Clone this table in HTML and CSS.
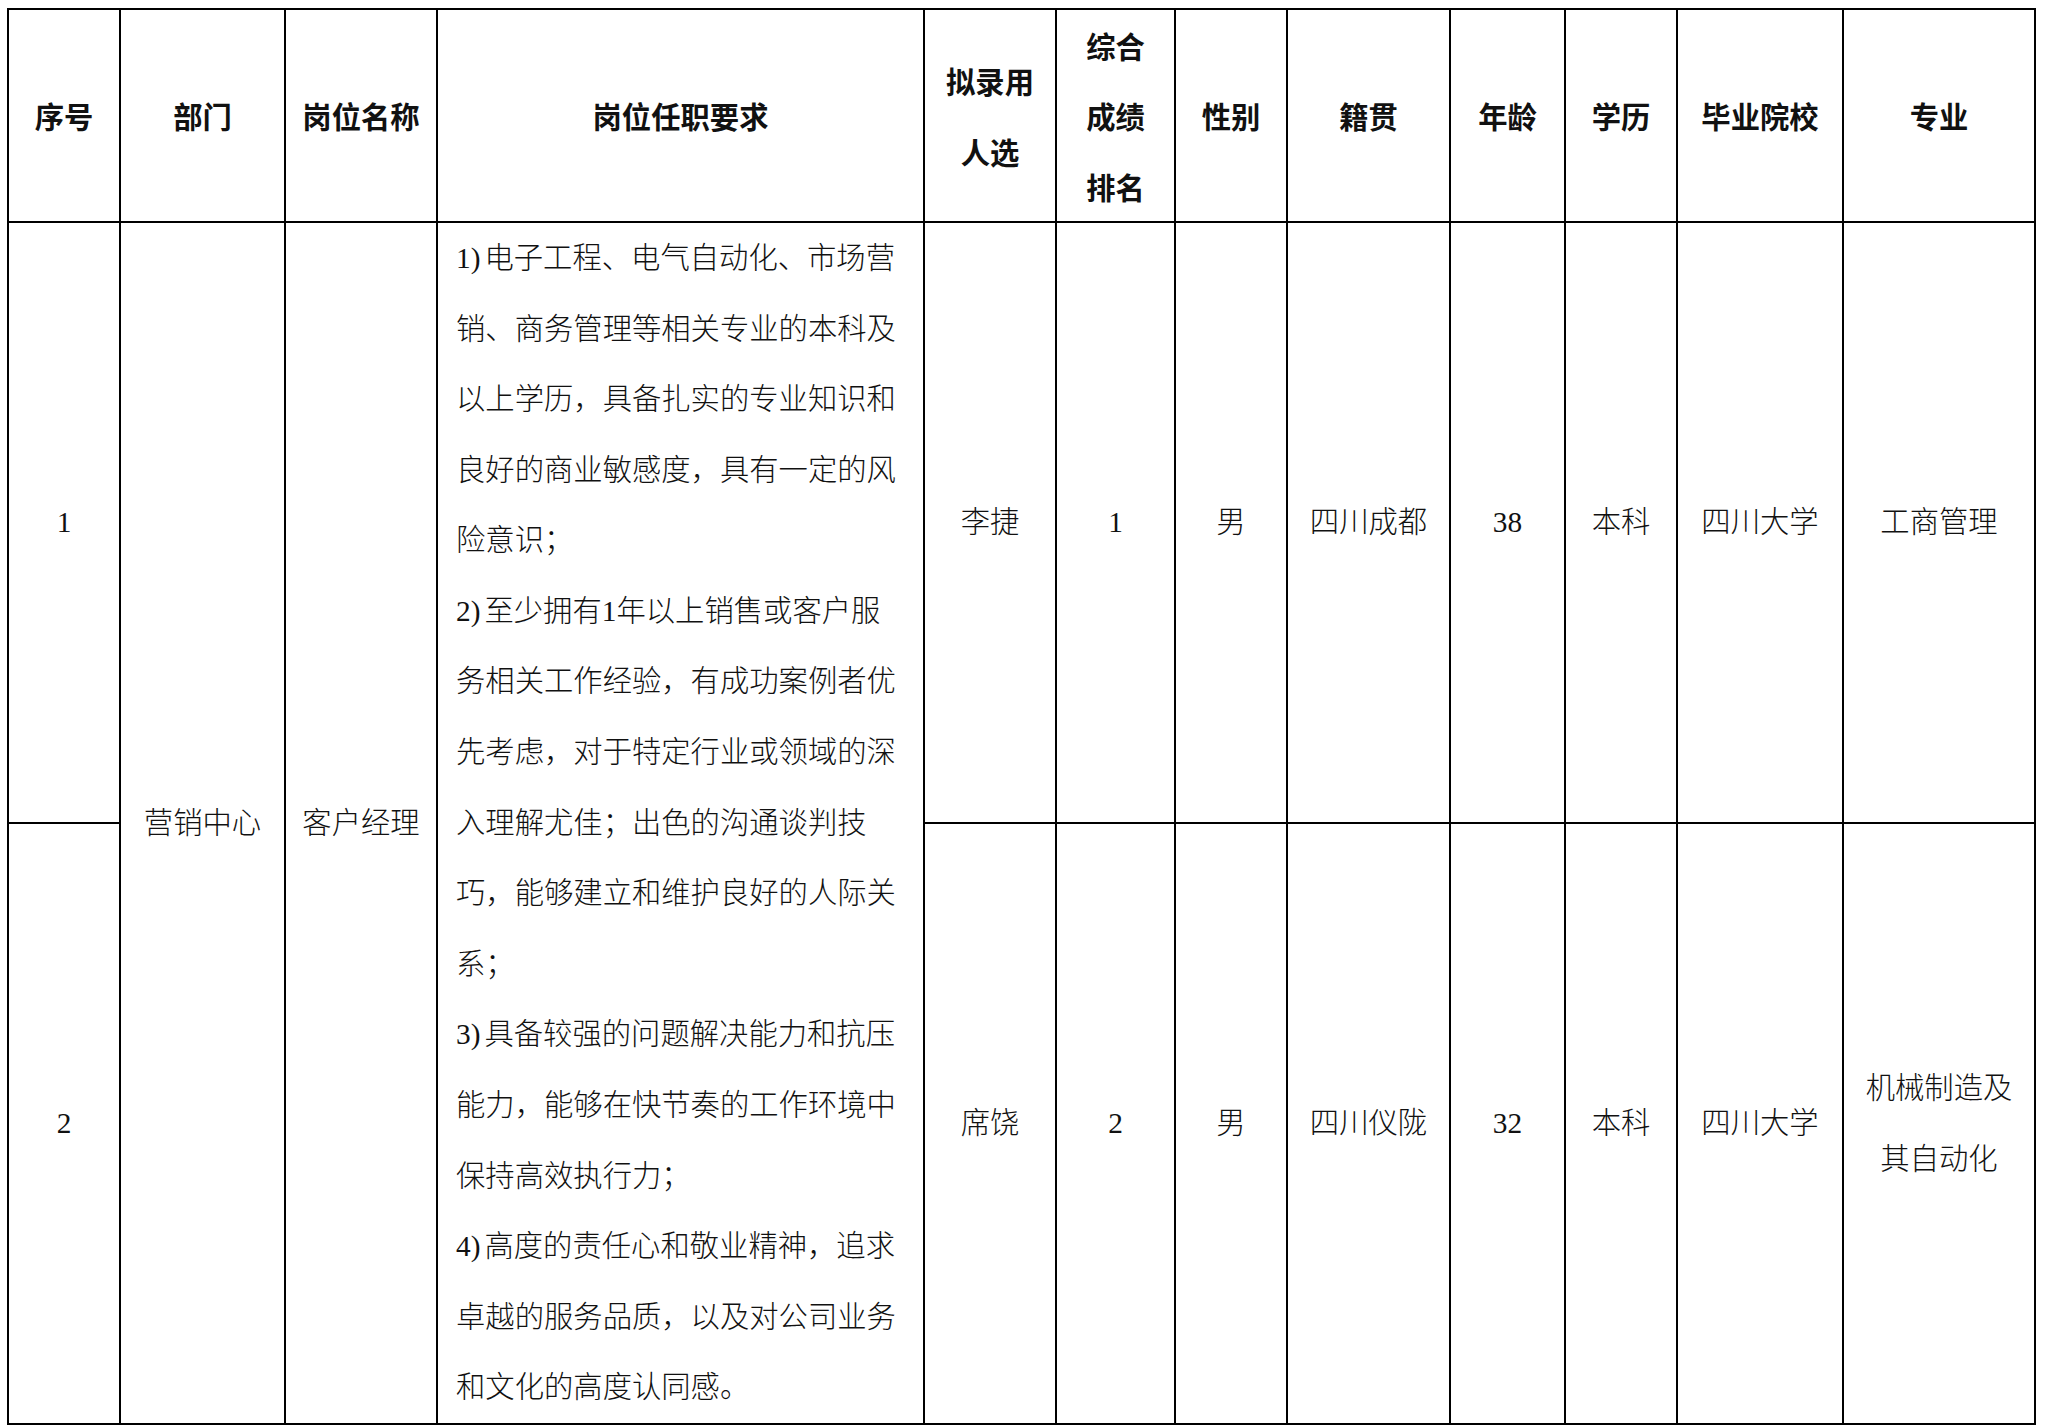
FILE: index.html
```html
<!DOCTYPE html>
<html lang="zh-CN">
<head>
<meta charset="utf-8">
<title>拟录用人员名单</title>
<link rel="stylesheet" href="styles.css">
</head>
<body>
<div class="page">
<table class="roster">
  <colgroup>
    <col class="c1"><col class="c2"><col class="c3"><col class="c4"><col class="c5"><col class="c6">
    <col class="c7"><col class="c8"><col class="c9"><col class="c10"><col class="c11"><col class="c12">
  </colgroup>
  <thead>
    <tr class="head-row">
      <th>序号</th>
      <th>部门</th>
      <th>岗位名称</th>
      <th>岗位任职要求</th>
      <th class="multi">拟录用<br>人选</th>
      <th class="multi">综合<br>成绩<br>排名</th>
      <th>性别</th>
      <th>籍贯</th>
      <th>年龄</th>
      <th>学历</th>
      <th>毕业院校</th>
      <th>专业</th>
    </tr>
  </thead>
  <tbody>
    <tr class="body-row">
      <td class="num">1</td>
      <td rowspan="2">营销中心</td>
      <td rowspan="2">客户经理</td>
      <td rowspan="2" class="req"><span class="num item">1)</span>电子工程、电气自动化、市场营<br>销、商务管理等相关专业的本科及<br>以上学历，具备扎实的专业知识和<br>良好的商业敏感度，具有一定的风<br>险意识；<br><span class="num item">2)</span>至少拥有<span class="num">1</span>年以上销售或客户服<br>务相关工作经验，有成功案例者优<br>先考虑，对于特定行业或领域的深<br>入理解尤佳；出色的沟通谈判技<br>巧，能够建立和维护良好的人际关<br>系；<br><span class="num item">3)</span>具备较强的问题解决能力和抗压<br>能力，能够在快节奏的工作环境中<br>保持高效执行力；<br><span class="num item">4)</span>高度的责任心和敬业精神，追求<br>卓越的服务品质，以及对公司业务<br>和文化的高度认同感。</td>
      <td>李捷</td>
      <td class="num">1</td>
      <td>男</td>
      <td>四川成都</td>
      <td class="num">38</td>
      <td>本科</td>
      <td>四川大学</td>
      <td>工商管理</td>
    </tr>
    <tr class="body-row">
      <td class="num">2</td>
      <td>席饶</td>
      <td class="num">2</td>
      <td>男</td>
      <td>四川仪陇</td>
      <td class="num">32</td>
      <td>本科</td>
      <td>四川大学</td>
      <td class="two-line">机械制造及<br>其自动化</td>
    </tr>
  </tbody>
</table>
</div>
</body>
</html>
```
FILE: styles.css
```css
html, body {
  margin: 0;
  padding: 0;
  background: #ffffff;
}

.page {
  padding: 8px 0 0 7px;
}

.roster {
  table-layout: fixed;
  width: 2029px;
  border-collapse: separate;
  border-spacing: 0;
  border-top: 2px solid #000;
  border-left: 2px solid #000;
  font-family: "Liberation Serif", "Noto Sans CJK SC", serif;
  font-size: 29.33px;
  color: #111;
}

.c1 { width: 112px; }
.c2 { width: 165px; }
.c3 { width: 152px; }
.c4 { width: 487px; }
.c5 { width: 132px; }
.c6 { width: 119px; }
.c7 { width: 112px; }
.c8 { width: 163px; }
.c9 { width: 115px; }
.c10 { width: 112px; }
.c11 { width: 166px; }
.c12 { width: 192px; }

.roster th,
.roster td {
  box-sizing: border-box;
  border-right: 2px solid #000;
  border-bottom: 2px solid #000;
  padding: 0;
  text-align: center;
  vertical-align: middle;
  white-space: nowrap;
  font-weight: 300;
}

.roster th {
  font-family: "Noto Sans CJK SC", sans-serif;
  font-weight: 700;
  line-height: 70.3px;
}

.head-row {
  height: 213px;
}

.body-row {
  height: 601px;
}

.roster td {
  line-height: 70.5px;
}

.roster td.req {
  text-align: left;
  vertical-align: top;
  padding-left: 18px;
  line-height: 70.58px;
}

.num {
  font-family: "Liberation Serif", serif;
  font-weight: 400;
}

.item {
  margin-right: 4px;
}
```
